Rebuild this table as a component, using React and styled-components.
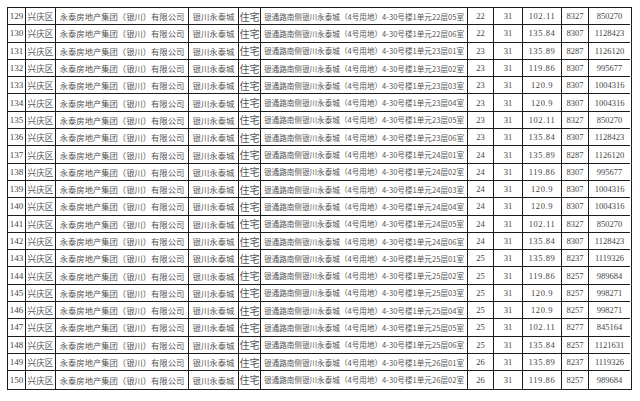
import React from "react";
import styled, { createGlobalStyle } from "styled-components";

const Global = createGlobalStyle`
  html, body { margin: 0; padding: 0; background: #fff; }
  body { width: 640px; height: 401px; overflow: hidden; }
`;

const rows = [
  ["22层05室", 22, "102.11", 8327, 850270],
  ["22层06室", 22, "135.84", 8307, 1128423],
  ["23层01室", 23, "135.89", 8287, 1126120],
  ["23层02室", 23, "119.86", 8307, 995677],
  ["23层03室", 23, "120.9", 8307, 1004316],
  ["23层04室", 23, "120.9", 8307, 1004316],
  ["23层05室", 23, "102.11", 8327, 850270],
  ["23层06室", 23, "135.84", 8307, 1128423],
  ["24层01室", 24, "135.89", 8287, 1126120],
  ["24层02室", 24, "119.86", 8307, 995677],
  ["24层03室", 24, "120.9", 8307, 1004316],
  ["24层04室", 24, "120.9", 8307, 1004316],
  ["24层05室", 24, "102.11", 8327, 850270],
  ["24层06室", 24, "135.84", 8307, 1128423],
  ["25层01室", 25, "135.89", 8237, 1119326],
  ["25层02室", 25, "119.86", 8257, 989684],
  ["25层03室", 25, "120.9", 8257, 998271],
  ["25层04室", 25, "120.9", 8257, 998271],
  ["25层05室", 25, "102.11", 8277, 845164],
  ["25层06室", 25, "135.84", 8257, 1121631],
  ["26层01室", 26, "135.89", 8237, 1119326],
  ["26层02室", 26, "119.86", 8257, 989684],
];

const Page = styled.div`
  padding: 7px 0 0 7px;
`;

const Table = styled.div`
  width: 625px;
  box-sizing: border-box;
  border: 1.5px solid #1c1c1c;
  display: grid;
  grid-template-columns: 18px 30px 133px 50px 22px 207px 26px 29px 39px 27px 41px;
  grid-auto-rows: 17.3px;
`;

const Cell = styled.div`
  box-sizing: border-box;
  display: flex;
  align-items: center;
  justify-content: center;
  white-space: nowrap;
  overflow: hidden;
  border-right: ${(p) => (p.$last ? "none" : "1px solid #1c1c1c")};
  border-bottom: ${(p) => (p.$bottom ? "none" : "1px solid #1c1c1c")};
  color: ${(p) => (p.$num ? "#444" : "#555")};
  font-family: ${(p) =>
    p.$num
      ? '"Liberation Serif", "Times New Roman", serif'
      : '"Noto Sans CJK SC", "Noto Sans", sans-serif'};
  font-size: ${(p) => p.$size || 8.4}px;
  letter-spacing: ${(p) => p.$ls || 0}px;
  font-weight: 400;
`;

export default function App() {
  return (
    <Page>
      <Global />
      <Table>
        {rows.map((r, i) => {
          const bottom = i === rows.length - 1;
          return (
            <React.Fragment key={i}>
              <Cell $num $size={9} $bottom={bottom}>{129 + i}</Cell>
              <Cell $size={8.6} $bottom={bottom}>兴庆区</Cell>
              <Cell $size={8.3} $bottom={bottom}>永泰房地产集团（银川）有限公司</Cell>
              <Cell $size={8.4} $bottom={bottom}>银川永泰城</Cell>
              <Cell $size={10} $bottom={bottom}>住宅</Cell>
              <Cell $size={7.6} $bottom={bottom}>
                银通路南侧银川永泰城（4号用地）4-30号楼1单元{r[0]}
              </Cell>
              <Cell $num $size={8.5} $bottom={bottom}>{r[1]}</Cell>
              <Cell $num $size={8.5} $bottom={bottom}>31</Cell>
              <Cell $num $size={8.5} $ls={0.6} $bottom={bottom}>{r[2]}</Cell>
              <Cell $num $size={8.5} $bottom={bottom}>{r[3]}</Cell>
              <Cell $num $size={8.5} $last $bottom={bottom}>{r[4]}</Cell>
            </React.Fragment>
          );
        })}
      </Table>
    </Page>
  );
}
